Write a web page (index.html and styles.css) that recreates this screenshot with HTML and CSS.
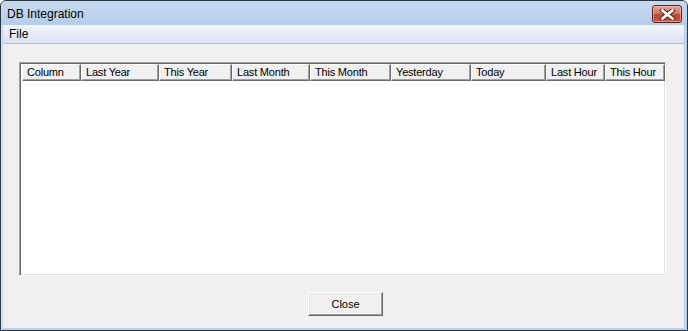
FILE: index.html
```html
<!DOCTYPE html>
<html lang="en">
<head>
    <meta charset="UTF-8">
    <title>DB Integration</title>
    <link rel="stylesheet" href="styles.css">
</head>
<body>
    <div class="window">
        <div class="titlebar">
            <span class="title">DB Integration</span>
            <div class="close-btn">
                <svg width="17" height="11" viewBox="0 0 17 11">
                    <path d="M3.5 1.5 L13.5 9.5 M13.5 1.5 L3.5 9.5" stroke="#4a1a14" stroke-width="4.6" stroke-linecap="square"/>
                    <path d="M3.5 1.5 L13.5 9.5 M13.5 1.5 L3.5 9.5" stroke="#ffffff" stroke-width="2.8" stroke-linecap="square"/>
                </svg>
            </div>
        </div>
        <div class="menubar">
            <span class="menu-item">File</span>
        </div>
        <div class="client">
            <div class="listview">
                <div class="header">
                    <div class="col" style="width: 59px">Column</div>
                    <div class="col" style="width: 78px">Last Year</div>
                    <div class="col" style="width: 73px">This Year</div>
                    <div class="col" style="width: 78px">Last Month</div>
                    <div class="col" style="width: 81px">This Month</div>
                    <div class="col" style="width: 80px">Yesterday</div>
                    <div class="col" style="width: 75px">Today</div>
                    <div class="col" style="width: 59px">Last Hour</div>
                    <div class="col" style="width: 60px">This Hour</div>
                </div>
            </div>
            <div class="footer">
                <button class="btn">Close</button>
            </div>
        </div>
    </div>
</body>
</html>
```

FILE: styles.css
```css
* {
    margin: 0;
    padding: 0;
    box-sizing: border-box;
}

body {
    font-family: 'Liberation Sans', Arial, sans-serif;
    background: #ffffff;
}

.window {
    width: 688px;
    height: 331px;
    border: 1px solid #2c3440;
    border-radius: 6px 6px 0 0;
    background: #bcd2ea;
    padding: 0 3px 2px 2px;
    display: flex;
    flex-direction: column;
    overflow: hidden;
    box-shadow: inset 1px 0 0 #e6eef8;
}

.titlebar {
    height: 24px;
    display: flex;
    align-items: center;
    background: linear-gradient(#c6d9ee, #b6cde8);
    margin: 0 -3px 0 -2px;
    padding-right: 5px;
    padding-left: 6px;
}

.title {
    font-size: 12px;
    color: #000;
    padding-top: 2px;
}

.close-btn {
    margin-left: auto;
    width: 30px;
    height: 18px;
    margin-top: 2px;
    border: 1px solid #5e2219;
    border-radius: 3px;
    background: linear-gradient(#e3a293 0%, #d27a66 45%, #bb4632 55%, #c8583f 100%);
    display: flex;
    align-items: center;
    justify-content: center;
    box-shadow: inset 0 0 0 1px rgba(255, 220, 210, 0.45);
}

.menubar {
    height: 19px;
    display: flex;
    align-items: center;
    background: linear-gradient(#f3f5fb, #dbe2f2);
    border-bottom: 1px solid #b5bdd0;
}

.menu-item {
    font-size: 12px;
    padding-left: 6px;
    color: #000;
}

.client {
    flex: 1;
    background: #f0f0f0;
    padding: 18px 18px 0 16px;
    display: flex;
    flex-direction: column;
}

.listview {
    height: 214px;
    background: #ffffff;
    border: 1px solid;
    border-color: #a0a0a0 #ffffff #ffffff #a0a0a0;
    box-shadow: inset 1px 1px 0 #696969, inset -1px -1px 0 #e3e3e3;
    padding: 1px 1px 1px 2px;
}

.header {
    display: flex;
    height: 17px;
}

.col {
    flex: none;
    height: 17px;
    font-size: 11px;
    line-height: 15px;
    padding-left: 4px;
    letter-spacing: -0.2px;
    background: #f0f0f0;
    border-top: 1px solid #ffffff;
    border-left: 1px solid #ffffff;
    border-right: 1px solid #696969;
    border-bottom: 1px solid #696969;
    box-shadow: inset -1px -1px 0 #a0a0a0;
    white-space: nowrap;
    overflow: hidden;
    color: #000;
}

.footer {
    display: flex;
    justify-content: center;
    margin-top: 16px;
    padding-left: 6px;
}

.btn {
    width: 75px;
    height: 24px;
    font-family: 'Liberation Sans', Arial, sans-serif;
    font-size: 11px;
    color: #000;
    background: #f0f0f0;
    border: 1px solid;
    border-color: #ffffff #696969 #696969 #ffffff;
    box-shadow: inset -1px -1px 0 #a0a0a0, inset 1px 1px 0 #e3e3e3;
}
```
